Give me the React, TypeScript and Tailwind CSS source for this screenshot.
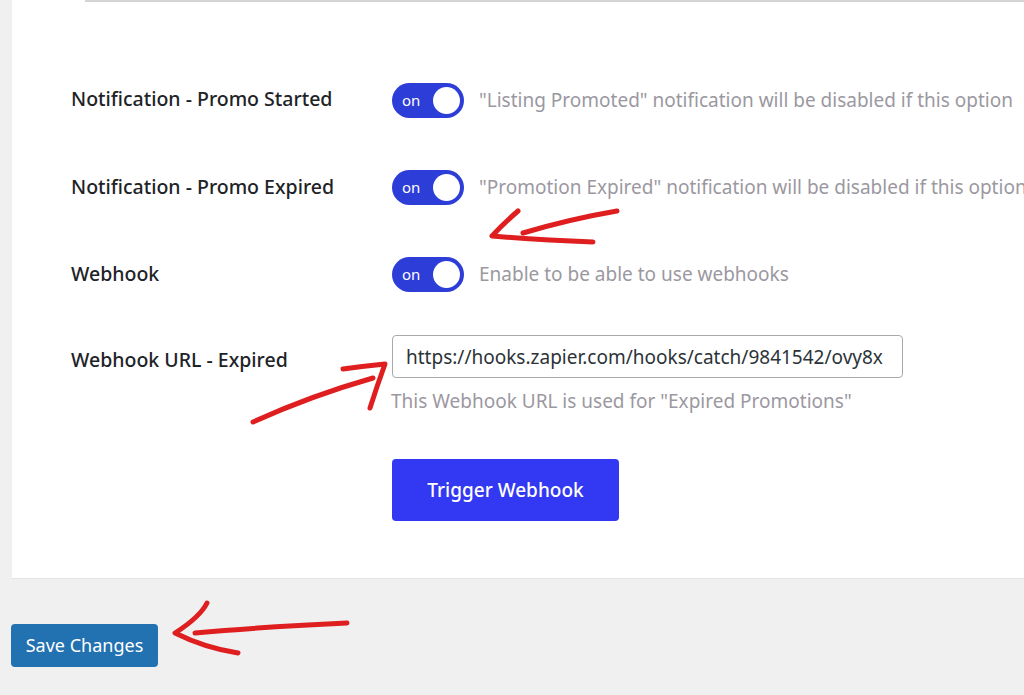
import { ReactNode } from 'react';

const font = { fontFamily: '"Segoe UI", "Noto Sans", "Open Sans", sans-serif' };

const Toggle = () => (
  <div className="flex items-center justify-between w-[72px] h-[35px] rounded-full bg-[#2c3dd8] pl-[10px] pr-[4px] shrink-0">
    <span className="text-white text-[15px] leading-none">on</span>
    <span className="w-[27px] h-[27px] rounded-full bg-white" />
  </div>
);

const Row = ({ label, children, labelClass = '' }: { label: string; children: ReactNode; labelClass?: string }) => (
  <div className="flex items-center">
    <div className={`w-[321px] shrink-0 text-[19.5px] font-medium text-[#1d2327] ${labelClass}`}>{label}</div>
    {children}
  </div>
);

const Arrows = () => (
  <svg className="absolute inset-0 pointer-events-none" width="1024" height="695" viewBox="0 0 1024 695">
    <g fill="none" stroke="#df1f1f" strokeWidth="5" strokeLinecap="round" strokeLinejoin="round">
      <path d="M518 211 Q503 224 492 236 Q540 240 593 242" />
      <path d="M523 233 Q570 219 617 211" />
      <path d="M253 422 Q310 396 373 378" />
      <path d="M343 369 Q365 366 385 364 Q377 386 370 408" />
      <path d="M207 603 Q200 617 175 633 Q205 648 238 653" />
      <path d="M195 633 Q260 627 347 623" />
    </g>
  </svg>
);

export default function App() {
  return (
    <div className="relative w-[1024px] h-[695px] overflow-hidden bg-[#f0f0f1]" style={font}>
      <div className="ml-[12px] bg-white border-b border-[#e2e3e5] pb-[57px]">
        <div className="ml-[73px] h-[2px] bg-[#d4d5d7]" />
        <div className="pl-[59px] pt-[81px] flex flex-col">
          <Row label="Notification - Promo Started" labelClass="-mt-[4px]">
            <Toggle />
            <span className="ml-[15px] whitespace-nowrap text-[19px] text-[#9b98a1]">
              "Listing Promoted" notification will be disabled if this option
            </span>
          </Row>
          <div className="mt-[52px]">
            <Row label="Notification - Promo Expired" labelClass="-mt-[2px]">
              <Toggle />
              <span className="ml-[15px] whitespace-nowrap text-[19px] text-[#9b98a1]">
                "Promotion Expired" notification will be disabled if this option
              </span>
            </Row>
          </div>
          <div className="mt-[52px]">
            <Row label="Webhook" labelClass="-mt-[2px]">
              <Toggle />
              <span className="ml-[15px] whitespace-nowrap text-[19px] text-[#9b98a1]">
                Enable to be able to use webhooks
              </span>
            </Row>
          </div>
          <div className="mt-[43px]">
            <Row label="Webhook URL - Expired" labelClass="mt-[6px]">
              <input
                readOnly
                value="https://hooks.zapier.com/hooks/catch/9841542/ovy8x"
                className="w-[511px] h-[43px] border border-[#a7a9ad] rounded-[4px] px-[13px] text-[19px] text-[#2c3338] outline-none"
                style={font}
              />
            </Row>
          </div>
          <div className="ml-[320px] mt-[9px] text-[19px] leading-[28px] text-[#9b98a1]">
            This Webhook URL is used for "Expired Promotions"
          </div>
          <div className="ml-[321px] mt-[44px]">
            <button className="w-[227px] h-[62px] rounded-[4px] bg-[#3339f2] text-white text-[19px] font-medium">
              Trigger Webhook
            </button>
          </div>
        </div>
      </div>
      <div className="pl-[11px] pt-[45px]">
        <button className="w-[147px] h-[43px] rounded-[4px] bg-[#2271b1] text-white text-[18px]">
          Save Changes
        </button>
      </div>
      <Arrows />
    </div>
  );
}
